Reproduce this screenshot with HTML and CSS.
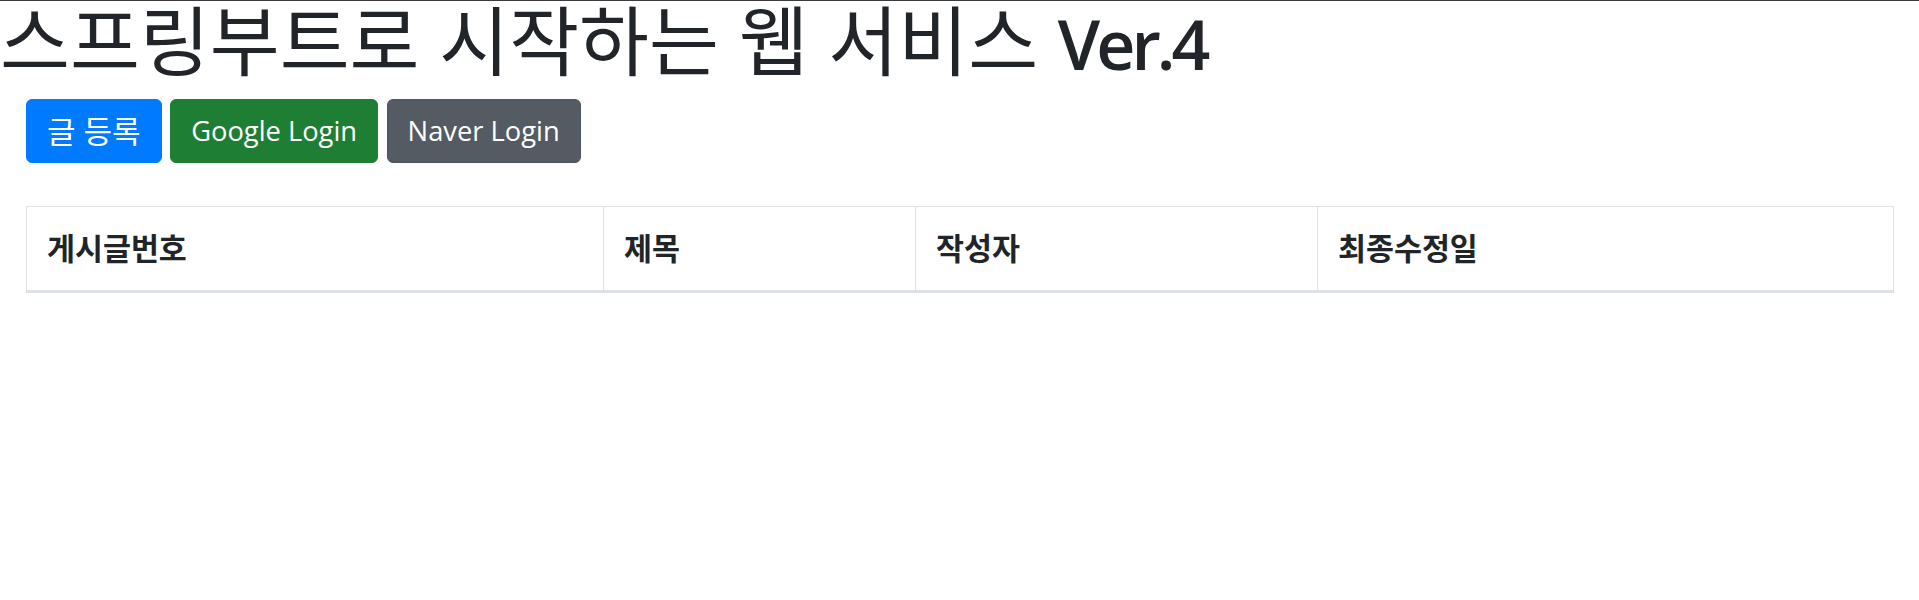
FILE: index.html
```html
<!DOCTYPE html>
<html lang="ko">
<head>
<meta charset="utf-8">
<title>스프링부트로 시작하는 웹 서비스 Ver.4</title>
<link rel="stylesheet" href="styles.css">
</head>
<body>
<h1 class="title">스프링부트로 시작하는 웹 서비스 <span class="ver">Ver.4</span></h1>
<div class="container">
  <div class="actions">
    <a class="btn btn-primary btn-ko">글 등록</a>
    <a class="btn btn-success">Google Login</a>
    <a class="btn btn-secondary">Naver Login</a>
  </div>
  <table class="board">
    <colgroup>
      <col class="c-id">
      <col class="c-title">
      <col class="c-author">
      <col class="c-date">
    </colgroup>
    <thead>
      <tr>
        <th>게시글번호</th>
        <th>제목</th>
        <th>작성자</th>
        <th>최종수정일</th>
      </tr>
    </thead>
    <tbody></tbody>
  </table>
</div>
</body>
</html>
```
FILE: styles.css
```css
html, body {
  margin: 0;
  padding: 0;
  background: #fff;
}
body {
  border-top: 1px solid #3c3c3c;
  color: #212529;
  font-family: "Open Sans", "Noto Sans CJK KR", sans-serif;
}
.title {
  margin: 0;
  height: 80px;
  font-size: 76px;
  font-weight: 400;
  line-height: 80px;
  color: #212529;
  white-space: nowrap;
}
.title .ver {
  font-size: 68px;
  font-weight: 600;
  letter-spacing: -4px;
  line-height: 1;
}
.container {
  padding: 18px 25px 0 26px;
}
.actions {
  display: flex;
  gap: 8.5px;
}
.btn {
  display: inline-block;
  font-size: 27.3px;
  line-height: 40px;
  padding: 11px 20px;
  border: 1px solid transparent;
  border-radius: 6px;
  color: #fff;
  text-decoration: none;
}
.btn-ko {
  font-size: 31px;
}
.btn-primary {
  background: #007bff;
  border-color: #007bff;
}
.btn-success {
  background: #1e7e34;
  border-color: #1e7e34;
}
.btn-secondary {
  background: #545b62;
  border-color: #4e555b;
}
.board {
  margin-top: 43px;
  width: 100%;
  border-collapse: collapse;
  table-layout: fixed;
  border: 1px solid #dee2e6;
}
.c-id { width: 577px; }
.c-title { width: 312px; }
.c-author { width: 402px; }
.c-date { width: auto; }
.board th {
  text-align: left;
  font-size: 30.4px;
  font-weight: 700;
  line-height: 43px;
  padding: 20px;
  border: 1px solid #dee2e6;
  border-bottom: 3px solid #dee2e6;
}
```
